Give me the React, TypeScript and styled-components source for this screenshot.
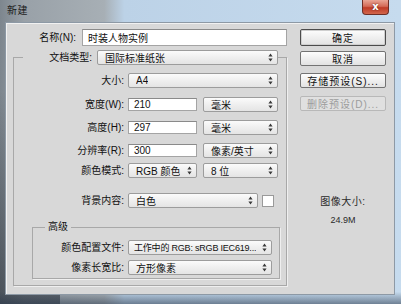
import React from "react";
import styled, { createGlobalStyle } from "styled-components";

const GlobalStyle = createGlobalStyle`
  html, body {
    margin: 0;
    padding: 0;
    background: #ffffff;
  }
  * {
    box-sizing: border-box;
  }
  body {
    font-family: "Liberation Sans", "Noto Sans CJK SC", sans-serif;
    font-size: 10px;
    color: #111111;
  }
`;

const Window = styled.div`
  width: 401px;
  height: 304px;
  display: flex;
  flex-direction: column;
  padding-left: 5px;
  background:
    linear-gradient(180deg, rgba(0, 0, 0, 0) 0%, rgba(0, 0, 0, 0) 96%, rgba(40, 55, 75, 0.55) 100%),
    linear-gradient(180deg, rgba(0, 0, 0, 0) 30%, rgba(30, 36, 44, 0.55) 100%) left / 60px 100% no-repeat,
    linear-gradient(90deg, #7d868e 0%, #99a1a8 6%, #a7afb5 26%, #bcd2e7 31%, #c6dbee 100%);
`;

const TitleBar = styled.div`
  height: 22px;
  display: flex;
  justify-content: space-between;
  align-items: flex-start;
`;

const Title = styled.span`
  padding: 5px 0 0 2px;
  font-size: 10px;
  line-height: 12px;
  color: #1c1c1c;
  letter-spacing: 0.5px;
`;

const CloseButton = styled.div`
  width: 27px;
  height: 15px;
  margin-right: 12px;
  display: flex;
  align-items: center;
  justify-content: center;
  border: 1px solid #6e2e26;
  border-top: none;
  border-radius: 0 0 4px 4px;
  background: linear-gradient(180deg, #e9a595 0%, #d46b58 45%, #bf3b27 55%, #d2664c 100%);
  color: #ffffff;
  font-family: "DejaVu Sans", sans-serif;
  font-size: 10px;
  font-weight: bold;
  line-height: 1;
  text-shadow: 0 0 2px #5a1a10;
`;

const Body = styled.div`
  flex: 1;
  margin: 0 6px 9px 0;
  display: flex;
  gap: 13px;
  padding: 6px 0 0 7px;
  background: #d8d8d8;
  border: 1px solid #8d99a5;
  box-shadow: inset 1px 1px 0 #f1f1f1;
`;

const LeftColumn = styled.div`
  width: 274px;
  display: flex;
  flex-direction: column;
`;

const RightColumn = styled.div`
  width: 86px;
  display: flex;
  flex-direction: column;
`;

const Row = styled.div<{ $mt?: number }>`
  display: flex;
  align-items: center;
  gap: 4px;
  height: 15px;
  margin-top: ${({ $mt }) => $mt ?? 0}px;
`;

const NameRow = styled(Row)`
  height: 17px;
  gap: 6px;
`;

const Label = styled.span<{ $w: number }>`
  width: ${({ $w }) => $w}px;
  flex-shrink: 0;
  text-align: right;
  white-space: nowrap;
  font-size: 10px;
  line-height: 15px;
  color: #111111;
`;

const Controls = styled.div`
  display: flex;
  align-items: center;
  gap: 6px;
`;

const TextInput = styled.div<{ $w?: number }>`
  ${({ $w }) => ($w ? `width: ${$w}px;` : "flex: 1;")}
  height: 100%;
  display: flex;
  align-items: center;
  padding-left: 5px;
  background: #ffffff;
  border: 1px solid #a4a4a4;
  border-top-color: #8a8a8a;
  font-size: 10px;
  color: #111111;
  white-space: nowrap;
`;

const Select = styled.div<{ $w: number; $compact?: boolean }>`
  width: ${({ $w }) => $w}px;
  height: 15px;
  flex-shrink: 0;
  display: flex;
  align-items: center;
  justify-content: space-between;
  padding: 0 4px 0 ${({ $compact }) => ($compact ? 5 : 7)}px;
  background: linear-gradient(180deg, #fbfbfb 0%, #efefef 50%, #e4e4e4 100%);
  border: 1px solid #9c9c9c;
  border-radius: 2px;
  font-size: ${({ $compact }) => ($compact ? 9 : 10)}px;
  letter-spacing: ${({ $compact }) => ($compact ? "-0.2px" : "0")};
  color: #111111;
  white-space: nowrap;
  overflow: hidden;

  span {
    overflow: hidden;
  }

  svg {
    flex-shrink: 0;
    margin-left: 2px;
  }
`;

const Swatch = styled.div`
  width: 12px;
  height: 12px;
  background: #ffffff;
  border: 1px solid #9a9a9a;
`;

const Group = styled.fieldset`
  margin: 4px 0 0;
  padding: 8px 6px 6px 0;
  min-width: 0;
  border: 1px solid #a8a8a8;
  box-shadow: 1px 1px 0 #efefef;
`;

const GroupHeader = styled.legend`
  margin-left: 9px;
  padding: 0;
  display: flex;
  align-items: center;
  gap: 5px;
`;

const SubGroup = styled.fieldset`
  margin: 13px 0 0 18px;
  padding: 7px 7px 3px 0;
  min-width: 0;
  border: 1px solid #a8a8a8;
  box-shadow: 1px 1px 0 #efefef;
`;

const SubLegend = styled.legend`
  margin-left: 12px;
  padding: 0 3px;
  font-size: 10px;
  line-height: 12px;
  color: #111111;
`;

const Button = styled.div<{ $mt?: number; $primary?: boolean; $disabled?: boolean }>`
  height: ${({ $primary }) => ($primary ? 17 : 15)}px;
  margin-top: ${({ $mt }) => $mt ?? 0}px;
  display: flex;
  align-items: center;
  justify-content: center;
  border: 1px solid ${({ $primary, $disabled }) => ($disabled ? "#b8b8b8" : $primary ? "#4b4b4b" : "#737373")};
  border-radius: 2px;
  background: ${({ $disabled }) =>
    $disabled ? "#e0e0e0" : "linear-gradient(180deg, #fdfdfd 0%, #efefef 50%, #e2e2e2 100%)"};
  box-shadow: ${({ $primary }) => ($primary ? "inset 0 0 0 1px #cfcfcf" : "none")};
  font-size: 10px;
  letter-spacing: 1px;
  color: ${({ $disabled }) => ($disabled ? "#9c9c9c" : "#111111")};
  white-space: nowrap;
`;

const ImageInfo = styled.div`
  margin-top: 84px;
  display: flex;
  flex-direction: column;
  align-items: center;
  gap: 4px;
  color: #2a2a2a;
`;

const InfoTitle = styled.span`
  font-size: 10px;
  line-height: 14px;
  letter-spacing: 0.5px;
`;

const InfoValue = styled.span`
  font-size: 9px;
  line-height: 14px;
`;

const Arrows = () => (
  <svg width="5" height="9" viewBox="0 0 5 9">
    <path d="M2.5 0.5 L4.6 3.4 H0.4 Z M2.5 8.5 L0.4 5.6 H4.6 Z" fill="#3a3a3a" />
  </svg>
);

const Dropdown = ({
  w,
  compact,
  children,
}: {
  w: number;
  compact?: boolean;
  children?: React.ReactNode;
}) => (
  <Select $w={w} $compact={compact}>
    <span>{children}</span>
    <Arrows />
  </Select>
);

const App = () => {
  return (
    <>
      <GlobalStyle />
      <Window>
        <TitleBar>
          <Title>新建</Title>
          <CloseButton>x</CloseButton>
        </TitleBar>
        <Body>
          <LeftColumn>
            <NameRow>
              <Label $w={63}>名称(N):</Label>
              <TextInput>时装人物实例</TextInput>
            </NameRow>

            <Group>
              <GroupHeader>
                <Label $w={69}>文档类型:</Label>
                <Dropdown w={181}>国际标准纸张</Dropdown>
              </GroupHeader>

              <Row>
                <Label $w={110}>大小:</Label>
                <Dropdown w={150}>A4</Dropdown>
              </Row>
              <Row $mt={9}>
                <Label $w={110}>宽度(W):</Label>
                <Controls>
                  <TextInput $w={69}>210</TextInput>
                  <Dropdown w={75}>毫米</Dropdown>
                </Controls>
              </Row>
              <Row $mt={8}>
                <Label $w={110}>高度(H):</Label>
                <Controls>
                  <TextInput $w={69}>297</TextInput>
                  <Dropdown w={75}>毫米</Dropdown>
                </Controls>
              </Row>
              <Row $mt={8}>
                <Label $w={110}>分辨率(R):</Label>
                <Controls>
                  <TextInput $w={69}>300</TextInput>
                  <Dropdown w={75}>像素/英寸</Dropdown>
                </Controls>
              </Row>
              <Row $mt={5}>
                <Label $w={110}>颜色模式:</Label>
                <Controls>
                  <Dropdown w={69}>RGB 颜色</Dropdown>
                  <Dropdown w={75}>8 位</Dropdown>
                </Controls>
              </Row>
              <Row $mt={15}>
                <Label $w={110}>背景内容:</Label>
                <Dropdown w={130}>白色</Dropdown>
                <Swatch />
              </Row>

              <SubGroup>
                <SubLegend>高级</SubLegend>
                <Row>
                  <Label $w={91}>颜色配置文件:</Label>
                  <Dropdown w={144} compact>
                    工作中的 RGB: sRGB IEC619...
                  </Dropdown>
                </Row>
                <Row $mt={5}>
                  <Label $w={91}>像素长宽比:</Label>
                  <Dropdown w={144}>方形像素</Dropdown>
                </Row>
              </SubGroup>
            </Group>
          </LeftColumn>

          <RightColumn>
            <Button $primary>确定</Button>
            <Button $mt={5}>取消</Button>
            <Button $mt={7}>存储预设(S)...</Button>
            <Button $mt={8} $disabled>
              删除预设(D)...
            </Button>
            <ImageInfo>
              <InfoTitle>图像大小:</InfoTitle>
              <InfoValue>24.9M</InfoValue>
            </ImageInfo>
          </RightColumn>
        </Body>
      </Window>
    </>
  );
};

export default App;
